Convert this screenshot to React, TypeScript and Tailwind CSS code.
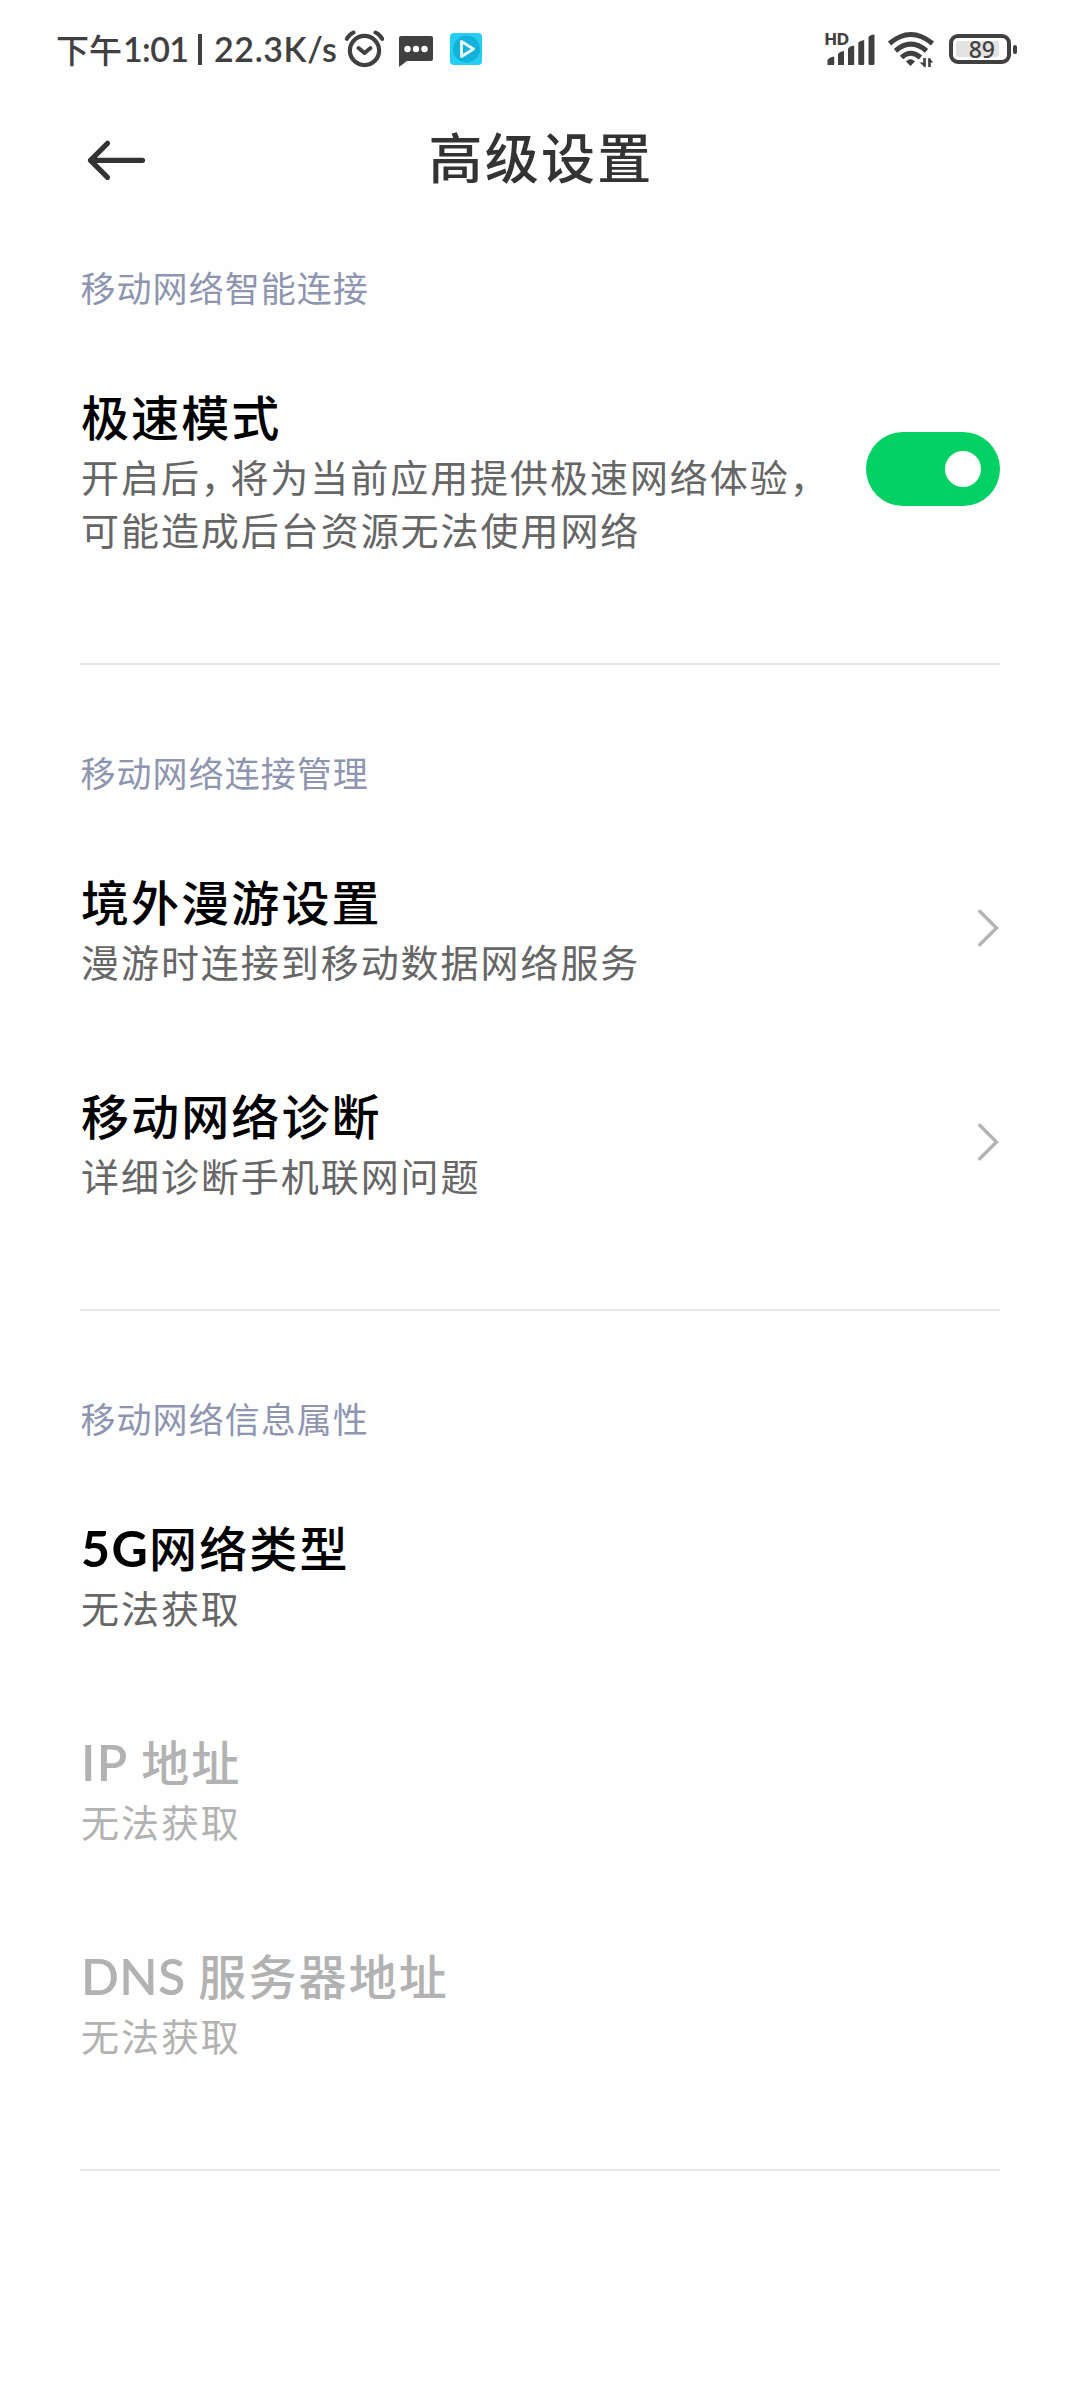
import React from "react";

const cjk = "font-['Noto_Sans_CJK_SC',sans-serif]";

function Latin({ children, className = "" }: { children: React.ReactNode; className?: string }) {
  return <span className={`font-['Lato','Noto_Sans_CJK_SC',sans-serif] ${className}`}>{children}</span>;
}

function StatusBar() {
  return (
    <header className="flex h-[100px] w-full items-center justify-between pl-[56px] pr-[63px] text-[#404040]">
      <div className="flex h-full items-center">
        <div className="-mt-[2px] flex items-center text-[34px] leading-[40px] font-medium whitespace-pre">
          <span className="w-[67px] text-[33px]">下午</span>
          <Latin className="w-[65px] font-semibold tracking-[-0.6px]">1:01</Latin>
          <span className="mr-[12px] ml-[10px] h-[31px] w-[4px] bg-[#404040]" />
          <Latin className="w-[128px] font-semibold tracking-[0.6px]">22.3K/s</Latin>
        </div>
        <svg className="ml-[2px] h-[40px] w-[40px]" viewBox="344 30 40 40" fill="none" stroke="#404040" strokeLinecap="round" strokeLinejoin="round">
          <circle cx="364.500" cy="50.500" r="14.600" strokeWidth="4.200" />
          <path d="M346.800 38.800Q349 34.500 353.500 32.500M382.200 38.800Q380 34.500 375.500 32.500" strokeWidth="4" />
          <path d="M358.500 48L364.500 53L370.500 48" strokeWidth="4" />
        </svg>
        <svg className="mt-[3px] ml-[15px] h-[32px] w-[34px]" viewBox="0 0 34 32">
          <path d="M2 0H32Q34 0 34 2V23Q34 25 32 25H8L0 31V2Q0 0 2 0Z" fill="#404040" />
          <circle cx="8.500" cy="13" r="3.200" fill="#fefefe" />
          <circle cx="17" cy="13" r="3.200" fill="#fefefe" />
          <circle cx="25.500" cy="13" r="3.200" fill="#fefefe" />
        </svg>
        <svg className="-mt-[2px] ml-[17px] h-[32px] w-[32px]" viewBox="0 0 32 32">
          <rect width="32" height="32" rx="4" fill="#25cff4" />
          <circle cx="16.500" cy="16" r="13.500" fill="#14b2da" />
          <path d="M11.500 8.500V23.500L23.500 16Z" fill="none" stroke="#eafaff" strokeWidth="2.800" strokeLinejoin="round" />
        </svg>
      </div>
      <div className="-mt-[2px] flex h-full items-center">
        <svg className="h-[40px] w-[52px]" viewBox="824 29 52 40" fill="#404040">
          <text x="824.500" y="45" fontSize="16.500" fontWeight="800" fontFamily="Lato, sans-serif" textLength="24.500" lengthAdjust="spacingAndGlyphs">HD</text>
          <path d="M827.500 60Q829 57.500 834.200 56.500V65H827.500Z" />
          <path d="M838 54Q839.500 51.500 844 51V65H838Z" />
          <path d="M848 48.500Q849.500 46 854.200 45.500V65H848Z" />
          <path d="M858.300 42.500Q860 40.500 864.200 40V63.500Q864.200 65 863 65H859.500Q858.300 65 858.300 63.500Z" />
          <path d="M868.500 37Q870 34.500 874.500 34.500V63.500Q874.500 65 873 65H870Q868.500 65 868.500 63.500Z" />
        </svg>
        <svg className="ml-[11px] h-[40px] w-[48px]" viewBox="887 29 48 40" fill="none" stroke="#404040">
          <path d="M889.500 43.500Q910.500 25.500 932.500 43.500" strokeWidth="5" />
          <path d="M895.500 50.800Q910.700 37.500 926.500 50.800" strokeWidth="5" />
          <path d="M901.500 57.500Q910.700 49 920.500 57.500" strokeWidth="5" />
          <path d="M906 61.500Q910.500 57 915 61.500L910.500 66Z" fill="#404040" stroke="none" />
          <path d="M924.500 58V66.500" strokeWidth="2.600" />
          <path d="M929.500 58.500V67" strokeWidth="2.600" />
          <path d="M919.500 62.500H925.500V67.500ZM928.500 57.500L933.500 62.500H928.500Z" fill="#404040" stroke="none" />
        </svg>
        <div className="ml-[14px] flex items-center gap-[2px]">
          <div className="flex h-[30px] w-[62px] items-center rounded-[9px] border-4 border-[#404040] px-[3px]">
            <div className="flex h-[16px] w-[43px] items-center justify-end rounded-[2px] bg-[#e3e3e3] pr-[4px]">
              <span className="font-['Noto_Sans',sans-serif] text-[23px] leading-[22px] font-medium">89</span>
            </div>
          </div>
          <div className="h-[9px] w-[4px] rounded-[2px] bg-[#404040]" />
        </div>
      </div>
    </header>
  );
}

function TitleBar() {
  return (
    <div className="grid h-[120px] grid-cols-[1fr_auto_1fr] items-center px-[85px]">
      <svg className="h-[44px] w-[64px]" viewBox="85 138 64 44" fill="none" stroke="#333333" strokeWidth="5.200" strokeLinecap="round" strokeLinejoin="round">
        <path d="M142.500 160.300H90.500M107.500 143.300L90.500 160.300L107.500 177.300" />
      </svg>
      <h1 className="-mt-[9px] -mr-[2px] text-[54px] leading-[72px] font-medium tracking-[2.200px] text-[#333333]">高级设置</h1>
    </div>
  );
}

function SectionLabel({ children }: { children: React.ReactNode }) {
  return <h2 className="pt-[82px] pb-[24px] pl-[0.500px] text-[35px] leading-[50px] tracking-[1.050px] text-[#8e95b0]">{children}</h2>;
}

function Chevron() {
  return (
    <svg className="mt-[2px] mr-[1px] h-[40px] w-[22px]" viewBox="977 908.500 22 40" fill="none" stroke="#b3b3b3" strokeWidth="3.400" strokeLinecap="round">
      <path d="M979.700 911.700L996.500 928.500L979.700 945.300" />
    </svg>
  );
}

function Switch() {
  return (
    <button role="switch" aria-checked="true" className="mt-[1px] flex h-[74px] w-[134px] shrink-0 items-center justify-end rounded-full bg-[#03d163] pr-[19px]">
      <span className="h-[36px] w-[36px] rounded-full bg-white" />
    </button>
  );
}

type RowProps = { title: React.ReactNode; detail: React.ReactNode; disabled?: boolean; end?: React.ReactNode };

function Row({ title, detail, disabled, end }: RowProps) {
  return (
    <div className="flex items-center justify-between pt-[46px] pb-[48px]">
      <div className="pl-[1px]">
        <div className={`h-[67px] text-[48px] leading-[66px] font-medium tracking-[2.100px] whitespace-pre ${disabled ? "text-[#b2b2b2]" : "text-black"}`}>{title}</div>
        <div className={`text-[38px] leading-[53px] tracking-[1.950px] whitespace-nowrap ${disabled ? "text-[#b2b2b2]" : "text-[#666666]"}`}>{detail}</div>
      </div>
      {end}
    </div>
  );
}

function Section({ label, children }: { label: string; children: React.ReactNode }) {
  return (
    <section className="border-b-2 border-[#e5e5e5] pb-[60px]">
      <SectionLabel>{label}</SectionLabel>
      {children}
    </section>
  );
}

export default function App() {
  return (
    <div className={`h-[2400px] w-[1080px] overflow-hidden bg-[#fefefe] ${cjk}`} lang="zh-CN">
      <StatusBar />
      <TitleBar />
      <main className="-mt-[40px] px-[80px]">
        <Section label="移动网络智能连接">
          <Row
            title="极速模式"
            detail={
              <>
                开启后<span className="tracking-[-8.500px]">，</span>将为当前应用提供极速网络体验，
                <br />
                可能造成后台资源无法使用网络
              </>
            }
            end={<Switch />}
          />
        </Section>
        <Section label="移动网络连接管理">
          <Row title="境外漫游设置" detail="漫游时连接到移动数据网络服务" end={<Chevron />} />
          <Row title="移动网络诊断" detail="详细诊断手机联网问题" end={<Chevron />} />
        </Section>
        <Section label="移动网络信息属性">
          <Row title={<><Latin className="text-[50px] font-bold tracking-[1.400px]">5G</Latin>网络类型</>} detail="无法获取" />
          <Row title={<><Latin className="text-[50px] font-semibold tracking-[1.400px]">IP </Latin>地址</>} detail="无法获取" disabled />
          <Row title={<><Latin className="text-[50px] font-semibold tracking-[0.300px]">DNS </Latin>服务器地址</>} detail="无法获取" disabled />
        </Section>
      </main>
    </div>
  );
}
